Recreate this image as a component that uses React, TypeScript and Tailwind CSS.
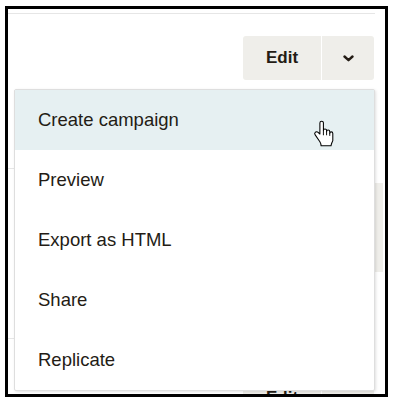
import React from "react";

const items = ["Create campaign", "Preview", "Export as HTML", "Share", "Replicate"];

function EditButton() {
  return (
    <div className="flex justify-end">
      <div className="flex h-[44px] gap-px">
        <div className="flex w-[78px] items-center justify-center rounded-l-[3px] bg-[#efeeea] text-[17px] font-bold text-[#241c15]">
          Edit
        </div>
        <div className="flex w-[52px] items-center justify-center rounded-r-[3px] bg-[#efeeea]">
          <svg width="11" height="7" viewBox="0 0 11 7" fill="none">
            <path d="M1.5 1.5L5.5 5.2L9.5 1.5" stroke="#241c15" strokeWidth="2.4" strokeLinecap="round" strokeLinejoin="round" />
          </svg>
        </div>
      </div>
    </div>
  );
}

function HandCursor() {
  return (
    <svg width="22" height="27" viewBox="-0.5 -0.5 18 23" className="absolute left-[313px] top-[120px]">
      <path
        d="M6.5 0.5C5.7 0.5 5 1.2 5 2V11.5L3.5 10C2.8 9.3 1.6 9.3 1 10C0.4 10.6 0.5 11.5 1 12.2L5 18C5.6 19 6 20 6 21.5H14.5C14.5 20 15.5 18.5 16 17V11C16 10.2 15.4 9.6 14.7 9.6C14 9.6 13.4 10.2 13.4 11V9.5C13.4 8.7 12.8 8.1 12 8.1C11.2 8.1 10.7 8.7 10.7 9.5V8.5C10.7 7.7 10.1 7.1 9.3 7.1C8.6 7.1 8 7.7 8 8.5V2C8 1.2 7.3 0.5 6.5 0.5Z"
        fill="#fff"
        stroke="#000"
        strokeWidth="0.9"
        strokeLinejoin="round"
      />
      <path d="M8 8.5V12.5M10.7 9.5V12.5M13.4 11V13" stroke="#000" strokeWidth="0.8" />
    </svg>
  );
}

export default function App() {
  return (
    <div className="relative h-[399px] w-[393px] bg-white pl-[5px] pt-[6px]" style={{ fontFamily: '"Liberation Sans", Arial, sans-serif' }}>
      <div className="h-[391px] w-[383px] overflow-hidden border-[3px] border-black">
        <div className="mr-[10px] mt-[4px] h-px bg-[#e6e6e6]" />

        {/* row 1 */}
        <div className="flex h-[155px] flex-col">
          <div className="pr-[11px] pt-[22px]">
            <EditButton />
          </div>
          <div className="mr-[10px] mt-auto h-px bg-[#e6e6e6]" />
        </div>

        {/* row 2 */}
        <div className="flex h-[170px] flex-col">
          <div className="flex justify-end pr-[2px] pt-[14px]">
            <div className="h-[89px] w-[12px] bg-[#efeeea]" />
          </div>
          <div className="mr-[10px] mt-auto h-px bg-[#e6e6e6]" />
        </div>

        {/* row 3 */}
        <div className="pr-[11px] pt-[37px]">
          <EditButton />
        </div>
      </div>

      {/* dropdown menu */}
      <div className="absolute left-[14px] top-[89px] w-[361px] rounded-[2px] border border-[#dedede] bg-white shadow-[1px_1px_3px_rgba(0,0,0,0.12)]">
        {items.map((label, i) => (
          <div
            key={label}
            className={`flex h-[60px] items-center pl-[23px] text-[18.5px] text-[#241c15] ${i === 0 ? "bg-[#e6f0f2]" : ""}`}
          >
            {label}
          </div>
        ))}
      </div>

      <HandCursor />
    </div>
  );
}
